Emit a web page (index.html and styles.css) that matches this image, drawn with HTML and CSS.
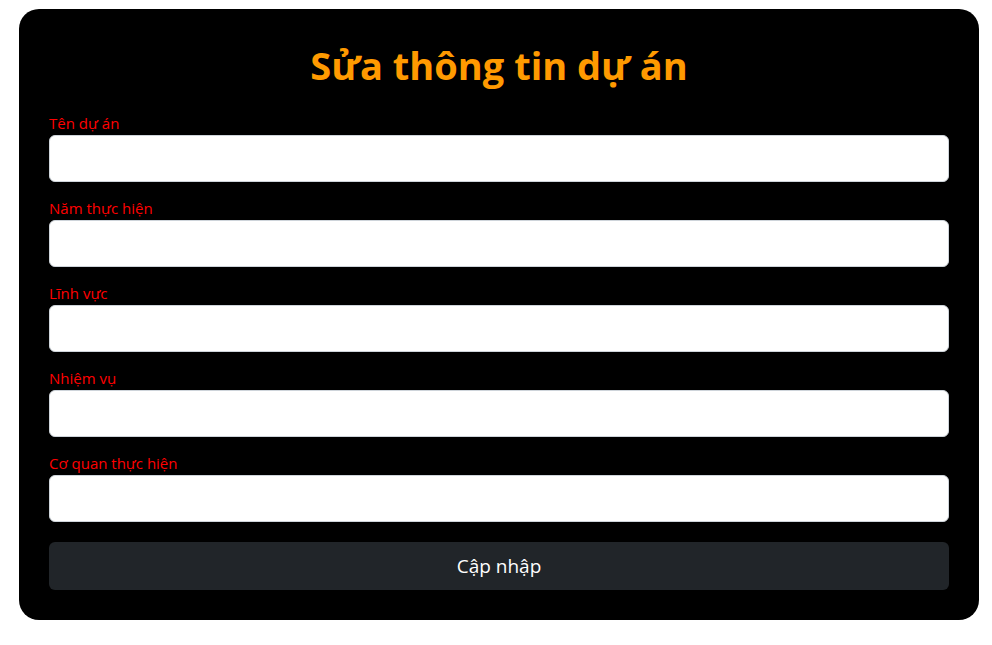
FILE: index.html
```html
<!DOCTYPE html>
<html lang="vi">
<head>
<meta charset="utf-8">
<title>Sửa thông tin dự án</title>
<link rel="stylesheet" href="styles.css">
</head>
<body>
<div class="page">
  <form class="card">
    <h1 class="title">Sửa thông tin dự án</h1>
    <div class="field">
      <label class="label" for="ten">Tên dự án</label>
      <input class="input" id="ten" type="text">
    </div>
    <div class="field">
      <label class="label" for="nam">Năm thực hiện</label>
      <input class="input" id="nam" type="text">
    </div>
    <div class="field">
      <label class="label" for="linhvuc">Lĩnh vực</label>
      <input class="input" id="linhvuc" type="text">
    </div>
    <div class="field">
      <label class="label" for="nhiemvu">Nhiệm vụ</label>
      <input class="input" id="nhiemvu" type="text">
    </div>
    <div class="field">
      <label class="label" for="coquan">Cơ quan thực hiện</label>
      <input class="input" id="coquan" type="text">
    </div>
    <button class="btn" type="button">Cập nhập</button>
  </form>
</div>
</body>
</html>
```
FILE: styles.css
```css
* { box-sizing: border-box; }
html, body { margin: 0; padding: 0; background: #fff; }
body { font-family: "Open Sans", "Noto Sans", sans-serif; }
.page { padding: 9px 13px 25px 19px; }
.card {
  width: 960px;
  background: #000;
  border-radius: 20px;
  padding: 30px 30px 30px 30px;
  display: flex;
  flex-direction: column;
}
.title {
  margin: 0 0 24px 0;
  padding-top: 4px;
  text-align: center;
  color: #ff9a00;
  font-size: 38px;
  font-weight: 700;
  line-height: 44px;
}
.field { display: flex; flex-direction: column; margin-bottom: 14px; }
.label {
  color: #ff0000;
  font-size: 15px;
  line-height: 24px;
}
.input {
  height: 47px;
  border: 1px solid #ced4da;
  border-radius: 6px;
  background: #fff;
  width: 100%;
}
.btn {
  margin-top: 6px;
  height: 48px;
  border: 0;
  border-radius: 6px;
  background: #212529;
  color: #fff;
  font-family: "Open Sans", "Noto Sans", sans-serif;
  font-size: 19px;
}
```
